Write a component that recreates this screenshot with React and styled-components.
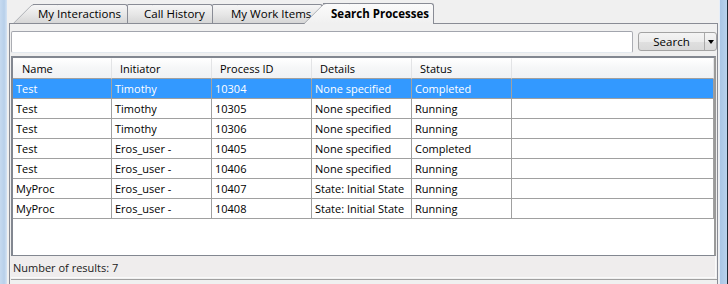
import styled, { createGlobalStyle } from "styled-components";

const GlobalStyle = createGlobalStyle`
  html, body {
    margin: 0;
    padding: 0;
    background: #f0f0f0;
  }
  body {
    font-family: "Open Sans", "Liberation Sans", sans-serif;
  }
`;

const Window = styled.div`
  display: flex;
  width: 728px;
  height: 284px;
  overflow: hidden;
  background: #f0f0f0;
`;

const EdgeLeft = styled.div`
  width: 7px;
  flex: none;
  background: linear-gradient(to right, #c6daf0, #b8d0ea 60%, #d4e3f4);
`;

const EdgeRight = styled.div`
  width: 7px;
  flex: none;
  border-left: 1px solid #e6eef8;
  border-right: 1px solid #1f2a36;
  background: linear-gradient(to right, #a9c6e6, #b9d2ec);
`;

const Main = styled.div`
  flex: 1;
  display: flex;
  flex-direction: column;
  padding: 3px 0 0 2px;
  margin-right: 1px;
`;

const TabStrip = styled.div`
  position: relative;
  z-index: 1;
  display: flex;
  align-items: flex-start;
  height: 20px;
  padding-left: 24px;
`;

const Tab = styled.div`
  position: relative;
  z-index: ${(p) => p.$z};
  box-sizing: border-box;
  width: ${(p) => p.$w}px;
  height: ${(p) => (p.$active ? 21 : 19)}px;
  margin-top: ${(p) => (p.$active ? 0 : 1)}px;
  padding-left: ${(p) => p.$pad}px;
  border-top: 1px solid #898c95;
  border-right: 1px solid #898c95;
  border-top-right-radius: 3px;
  background: ${(p) =>
    p.$active
      ? "linear-gradient(#fbfbfb, #f0f0f0)"
      : "linear-gradient(#f6f6f6, #e4e4e4 60%, #d6d6d6)"};
  font-size: 11.5px;
  font-weight: ${(p) => (p.$active ? 700 : 400)};
  line-height: ${(p) => (p.$active ? 19 : 17)}px;
  color: #000;
  white-space: nowrap;

  &::before {
    content: "";
    position: absolute;
    z-index: -1;
    left: -20px;
    top: -1px;
    bottom: 0;
    width: 26px;
    border-left: 1px solid #898c95;
    border-top: 1px solid #898c95;
    border-top-left-radius: 3px;
    background: inherit;
    transform: skewX(-45deg);
    transform-origin: bottom left;
  }
`;

const Pane = styled.div`
  flex: 1;
  display: flex;
  flex-direction: column;
  border: 1px solid #898c95;
  border-bottom: none;
  padding: 7px 0 0 1px;
`;

const SearchRow = styled.div`
  display: flex;
  align-items: flex-start;
  gap: 5px;
  height: 22px;
`;

const SearchField = styled.div`
  flex: 1;
  height: 22px;
  box-sizing: border-box;
  border: 1px solid #abadb3;
  border-top-color: #a2a5ad;
  border-bottom-color: #e3e9ef;
  border-radius: 2px;
  background: #fff;
`;

const SplitButton = styled.div`
  display: flex;
  margin-top: 1px;
  height: 19px;
  box-sizing: border-box;
  border: 1px solid #a3a3a3;
  border-radius: 3px;
  background: linear-gradient(#f4f4f4, #ececec 50%, #e0e0e0 50%, #d9d9d9);
  font-size: 11.5px;
  line-height: 17px;
`;

const ButtonMain = styled.div`
  width: 65px;
  text-align: center;
  border-right: 1px solid #a9a9a9;
`;

const ButtonArrow = styled.div`
  width: 11px;
  display: flex;
  align-items: center;
  justify-content: center;

  &::after {
    content: "";
    border-left: 3.5px solid transparent;
    border-right: 3.5px solid transparent;
    border-top: 4px solid #000;
  }
`;

const TableBox = styled.div`
  margin-top: 3px;
  margin-right: 1px;
  height: 200px;
  box-sizing: border-box;
  border: 1px solid #828790;
  border-top-width: 2px;
  border-left-width: 2px;
  border-right: 2px solid #9a9a9a;
  background: #fff;
  font-size: 11px;
  color: #000;
`;

const TableGrid = styled.div`
  display: grid;
  grid-template-columns: 99px 100px 100px 100px 100px 1fr;
`;

const HeadCell = styled.div`
  height: 21px;
  box-sizing: border-box;
  padding-left: ${(p) => (p.$first ? 9 : 8)}px;
  line-height: 19px;
  border-top: 1px solid #fdfdfd;
  border-right: 1px solid #e3e4e6;
  border-bottom: 1px solid #a0a0a0;
  background: linear-gradient(#ffffff, #f6f7f8 45%, #f1f2f4);
`;

const Cell = styled.div`
  height: 20px;
  box-sizing: border-box;
  padding-left: 3px;
  line-height: 19px;
  border-right: 1px solid #a0a0a0;
  border-bottom: 1px solid #a0a0a0;
  white-space: nowrap;
  overflow: hidden;
  background: ${(p) => (p.$selected ? "#3399ff" : "#fff")};
  color: ${(p) => (p.$selected ? "#fff" : "#000")};
`;

const Footer = styled.div`
  margin-right: 1px;
  height: 22px;
  box-sizing: border-box;
  padding-left: 2px;
  border-right: 1px solid #fafafa;
  border-bottom: 1px solid #fafafa;
  background: #efeded;
  font-size: 11px;
  line-height: 23px;
  color: #1a1a1a;
`;

const BottomRule = styled.div`
  margin-top: 1px;
  flex: 1;
  border-top: 1px solid #a0a0a0;
`;

const tabs = [
  { label: "My Interactions", w: 95, pad: 5, z: 4 },
  { label: "Call History", w: 85, pad: 16, z: 3 },
  { label: "My Work Items", w: 110, pad: 18, z: 2 },
  { label: "Search Processes", w: 111, pad: 8, z: 5, active: true },
];

const columns = ["Name", "Initiator", "Process ID", "Details", "Status", ""];

const rows = [
  ["Test", "Timothy", "10304", "None specified", "Completed"],
  ["Test", "Timothy", "10305", "None specified", "Running"],
  ["Test", "Timothy", "10306", "None specified", "Running"],
  ["Test", "Eros_user -", "10405", "None specified", "Completed"],
  ["Test", "Eros_user -", "10406", "None specified", "Running"],
  ["MyProc", "Eros_user -", "10407", "State: Initial State", "Running"],
  ["MyProc", "Eros_user -", "10408", "State: Initial State", "Running"],
];

function App() {
  return (
    <Window>
      <GlobalStyle />
      <EdgeLeft />
      <Main>
        <TabStrip>
          {tabs.map((t) => (
            <Tab key={t.label} $w={t.w} $pad={t.pad} $z={t.z} $active={t.active}>
              {t.label}
            </Tab>
          ))}
        </TabStrip>
        <Pane>
          <SearchRow>
            <SearchField />
            <SplitButton>
              <ButtonMain>Search</ButtonMain>
              <ButtonArrow />
            </SplitButton>
          </SearchRow>
          <TableBox>
            <TableGrid>
              {columns.map((c, i) => (
                <HeadCell key={i} $first={i === 0}>
                  {c}
                </HeadCell>
              ))}
              {rows.map((r, ri) =>
                [...r, ""].map((v, ci) => (
                  <Cell key={ri + "-" + ci} $selected={ri === 0}>
                    {v}
                  </Cell>
                ))
              )}
            </TableGrid>
          </TableBox>
          <Footer>Number of results: 7</Footer>
          <BottomRule />
        </Pane>
      </Main>
      <EdgeRight />
    </Window>
  );
}

export default App;
